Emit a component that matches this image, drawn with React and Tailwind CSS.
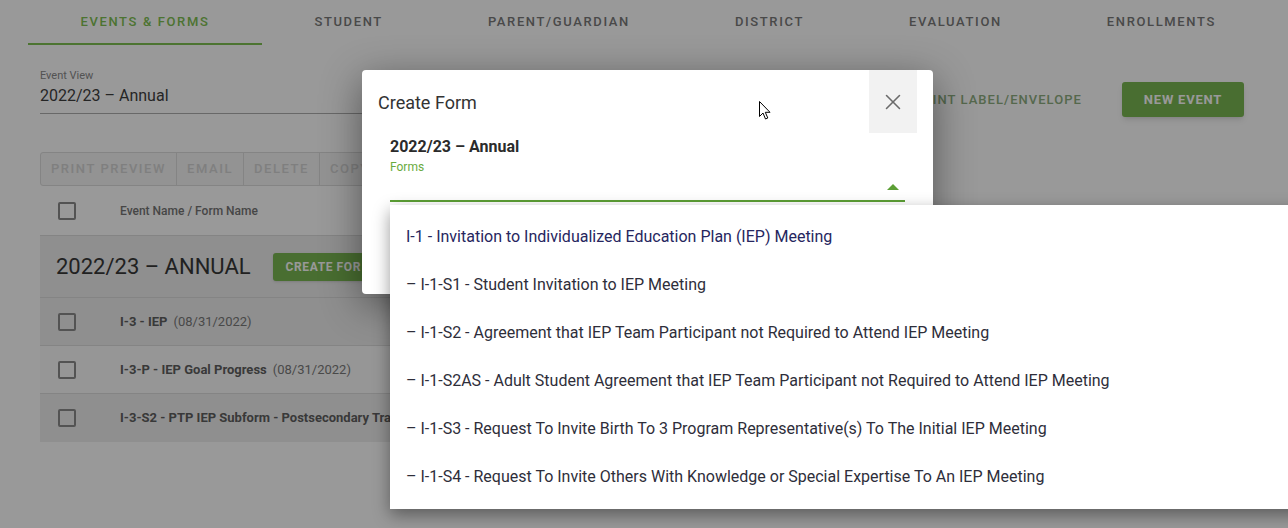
import React from 'react';
import { X } from 'lucide-react';

const tabs = ['Events & Forms', 'Student', 'Parent/Guardian', 'District', 'Evaluation', 'Enrollments'];

const rows = [
  { name: 'I-3 - IEP', date: '(08/31/2022)', bg: 'bg-[#efefef]' },
  { name: 'I-3-P - IEP Goal Progress', date: '(08/31/2022)', bg: 'bg-[#fbfbfb]' },
  { name: 'I-3-S2 - PTP IEP Subform - Postsecondary Tra', date: '', bg: 'bg-[#efefef]' },
];

const options = [
  'I-1 - Invitation to Individualized Education Plan (IEP) Meeting',
  '– I-1-S1 - Student Invitation to IEP Meeting',
  '– I-1-S2 - Agreement that IEP Team Participant not Required to Attend IEP Meeting',
  '– I-1-S2AS - Adult Student Agreement that IEP Team Participant not Required to Attend IEP Meeting',
  '– I-1-S3 - Request To Invite Birth To 3 Program Representative(s) To The Initial IEP Meeting',
  '– I-1-S4 - Request To Invite Others With Knowledge or Special Expertise To An IEP Meeting',
];

function Checkbox() {
  return <div className="w-[18px] h-[18px] rounded-[2px] border-2 border-[#8a8a8a] shrink-0" />;
}

export default function App() {
  return (
    <div className="relative w-full h-[528px] overflow-hidden bg-white font-['Roboto',sans-serif]">
      {/* page under the dialog */}
      <div className="flex flex-col">
        <div className="flex pl-[28px] h-[45px]">
          {tabs.map((t, i) => (
            <div
              key={t}
              className={
                'px-[52.5px] flex items-center uppercase text-[13px] font-medium tracking-[0.125em] border-b-2 ' +
                (i === 0 ? 'text-[#7fc153] border-[#7fc153]' : 'text-[#7a7a7a] border-transparent')
              }
            >
              {t}
            </div>
          ))}
        </div>

        <div className="flex items-start px-[40px] pt-[24px]">
          <div className="w-[420px] border-b border-[#adadad] pb-[7px]">
            <div className="text-[11px] text-[#8a8a8a] leading-[14px]">Event View</div>
            <div className="text-[16px] text-[#3f3f3f] leading-[20px] mt-[3px]">2022/23 – Annual</div>
          </div>
          <div className="ml-auto flex items-center gap-[40px] mt-[13px] mr-[4px]">
            <span className="text-[13px] font-medium tracking-[0.08em] text-[#8eae80]">PRINT LABEL/ENVELOPE</span>
            <button className="h-[35px] w-[122px] rounded-[3px] bg-[#7bb752] text-white text-[13px] font-bold tracking-[0.06em] shadow-md">
              NEW EVENT
            </button>
          </div>
        </div>

        <div className="px-[40px] mt-[35px]">
          <div className="flex h-[34px] w-fit rounded-[3px] border border-[#dcdcdc] bg-[#f5f5f5] text-[13px] font-medium tracking-[0.12em] text-[#d4d4d4]">
            <div className="px-[10px] flex items-center border-r border-[#dcdcdc]">PRINT PREVIEW</div>
            <div className="px-[10px] flex items-center border-r border-[#dcdcdc]">EMAIL</div>
            <div className="px-[10px] flex items-center border-r border-[#dcdcdc]">DELETE</div>
            <div className="px-[10px] flex items-center">COPY</div>
          </div>

          <div className="w-[350px] overflow-hidden">
            <div className="flex items-center h-[50px] border-b border-[#dcdcdc] pl-[18px]">
              <Checkbox />
              <span className="ml-[44px] text-[12px] font-medium text-[#767676] whitespace-nowrap">Event Name / Form Name</span>
            </div>
            <div className="flex items-center h-[62px] border-b border-[#dcdcdc] bg-[#eeeeee] pl-[16px]">
              <span className="text-[22px] text-[#383838] whitespace-nowrap">2022/23 – ANNUAL</span>
              <button className="ml-[22px] h-[28px] pl-[13px] rounded-l-[3px] bg-[#7bb752] text-white text-[12px] font-bold tracking-[0.05em] shadow whitespace-nowrap overflow-hidden flex-1 min-w-0 text-left">
                CREATE FOR
              </button>
            </div>
            {rows.map((r, i) => (
              <div
                key={r.name}
                className={'flex items-center h-[48px] pl-[18px] ' + r.bg + (i < rows.length - 1 ? ' border-b border-[#dcdcdc]' : '')}
              >
                <Checkbox />
                <div className="ml-[44px] flex-1 min-w-0 overflow-hidden whitespace-nowrap text-[13px]">
                  <span className="font-bold text-[#5f5f5f]">{r.name}</span>
                  {r.date && <span className="ml-[6px] text-[#7a7a7a]">{r.date}</span>}
                </div>
              </div>
            ))}
          </div>
        </div>
      </div>

      {/* backdrop */}
      <div className="absolute inset-0 bg-black/40" />

      {/* dialog */}
      <div className="absolute left-[362px] top-[70px] w-[571px] h-[224px] bg-white rounded-[4px] shadow-[0_10px_40px_rgba(0,0,0,0.45)]">
        <div className="flex items-start justify-between pl-[16px] pr-[16px]">
          <h2 className="pt-[22px] text-[18px] text-[#333] leading-[22px]">Create Form</h2>
          <button className="w-[48px] h-[63px] bg-[#f2f2f2] flex items-center justify-center text-[#6b6b6b]">
            <X size={26} strokeWidth={1.4} />
          </button>
        </div>
        <div className="px-[28px]">
          <div className="text-[16px] font-bold text-[#2b2b2b] leading-[20px] mt-[4px]">2022/23 – Annual</div>
          <div className="text-[12px] text-[#6aab3e] leading-[14px] mt-[3px]">Forms</div>
          <div className="flex justify-end pr-[6px] mt-[10px] h-[18px] items-start border-b-2 border-[#5c9f35]">
            <svg width="12" height="7" viewBox="0 0 12 7">
              <polygon points="6,0 12,6 0,6" fill="#5c9f35" />
            </svg>
          </div>
        </div>
      </div>

      {/* cursor */}
      <svg className="absolute left-[759px] top-[101px]" width="13" height="20" viewBox="0 0 13 20">
        <path d="M0.5 0.5 L0.5 15.5 L4 12 L6.5 18 L8.8 17 L6.3 11.3 L11 11.3 Z" fill="white" stroke="black" strokeWidth="1" />
      </svg>

      {/* open select menu */}
      <div className="absolute left-[390px] top-[205px] w-[920px] bg-white shadow-[0_6px_16px_rgba(0,0,0,0.4)] py-[8px]">
        {options.map((o, i) => (
          <div
            key={o}
            className={'h-[48px] flex items-center px-[16px] text-[16px] ' + (i === 0 ? 'text-[#26265e]' : 'text-[#2e2e3a]')}
          >
            {o}
          </div>
        ))}
      </div>
    </div>
  );
}
